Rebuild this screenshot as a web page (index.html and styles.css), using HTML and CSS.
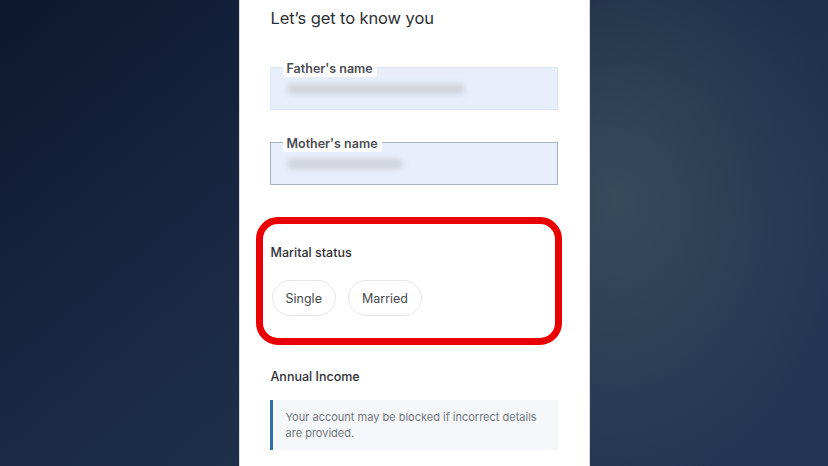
FILE: index.html
```html
<!doctype html>
<html lang="en">
<head>
    <meta charset="UTF-8">
    <title>Let's get to know you</title>
    <link rel="stylesheet" href="styles.css">
</head>
<body>
<div class="stage">
    <div class="panel">
        <h1 class="title">Let’s get to know you</h1>

        <div class="field">
            <span class="field-label">Father's name</span>
            <span class="blur blur-long"></span>
        </div>

        <div class="field field-active">
            <span class="field-label">Mother's name</span>
            <span class="blur blur-short"></span>
        </div>

        <div class="group highlight">
            <p class="group-title">Marital status</p>
            <div class="chips">
                <span class="chip">Single</span>
                <span class="chip">Married</span>
            </div>
        </div>

        <p class="group-title income">Annual Income</p>
        <div class="notice">
            Your account may be blocked if incorrect details<br>
            are provided.
        </div>
    </div>
</div>
</body>
</html>
```

FILE: styles.css
```css
html,
body {
    margin: 0;
    height: 100%;
}

body {
    font-family: Inter, "Noto Sans", sans-serif;
    background:
        radial-gradient(ellipse 300px 380px at 615px 200px, rgba(60, 80, 96, .85), rgba(60, 80, 96, 0) 78%),
        linear-gradient(140deg, #0d172f 0%, #1a2a44 40%, #223450 75%, #233552 100%);
    overflow: hidden;
}

.stage {
    display: flex;
    justify-content: center;
    height: 100%;
}

.panel {
    width: 351px;
    box-sizing: border-box;
    padding: 8px 31px 0 31px;
    background-color: #fff;
    border-left: 1px solid #d8dbe0;
    border-right: 1px solid #d8dbe0;
}

.title {
    margin: 0;
    font-size: 16.5px;
    line-height: 20px;
    font-weight: 400;
    color: #2e2f33;
    letter-spacing: -.1px;
}

.field {
    position: relative;
    height: 43px;
    margin-top: 39px;
    margin-left: -1px;
    box-sizing: border-box;
    padding: 16px 0 0 16px;
    background-color: #e8effb;
    border: 1px solid #dde6f3;
}

.field + .field {
    margin-top: 32px;
}

.field-active {
    border-color: #a9b1bc;
}

.field-label {
    position: absolute;
    top: -7px;
    left: 12px;
    padding: 0 4px;
    background-color: #fff;
    font-size: 12.5px;
    line-height: 16px;
    font-weight: 600;
    color: #4b4d52;
    border-radius: 2px;
}

.blur {
    display: block;
    height: 10px;
    border-radius: 5px;
    background-color: #cdd1d8;
    filter: blur(3px);
}

.blur-long {
    width: 178px;
}

.blur-short {
    width: 116px;
}

.group {
    margin-top: 59px;
}

.highlight {
    position: relative;
}

.highlight::after {
    content: '';
    position: absolute;
    top: -27px;
    left: -15px;
    right: -4px;
    bottom: -29px;
    border: 7px solid #ea0000;
    border-radius: 22px;
    pointer-events: none;
}

.group-title {
    margin: 0;
    font-size: 12.5px;
    line-height: 18px;
    font-weight: 500;
    color: #2f3034;
}

.chips {
    display: flex;
    gap: 12px;
    margin-top: 18px;
}

.chip {
    height: 36px;
    box-sizing: border-box;
    padding: 0 13px;
    display: flex;
    align-items: center;
    border: 1px solid #e6e7ea;
    border-radius: 18px;
    font-size: 12.5px;
    color: #47494e;
}

.chip:first-child {
    margin-left: 1px;
}

.income {
    margin-top: 52px;
}

.notice {
    margin-top: 14px;
    margin-left: -1px;
    padding: 9px 12px 9px 13px;
    background-color: #f5f7fa;
    border-left: 3px solid #2e6db0;
    font-size: 11px;
    line-height: 16px;
    color: #72757b;
}
```
